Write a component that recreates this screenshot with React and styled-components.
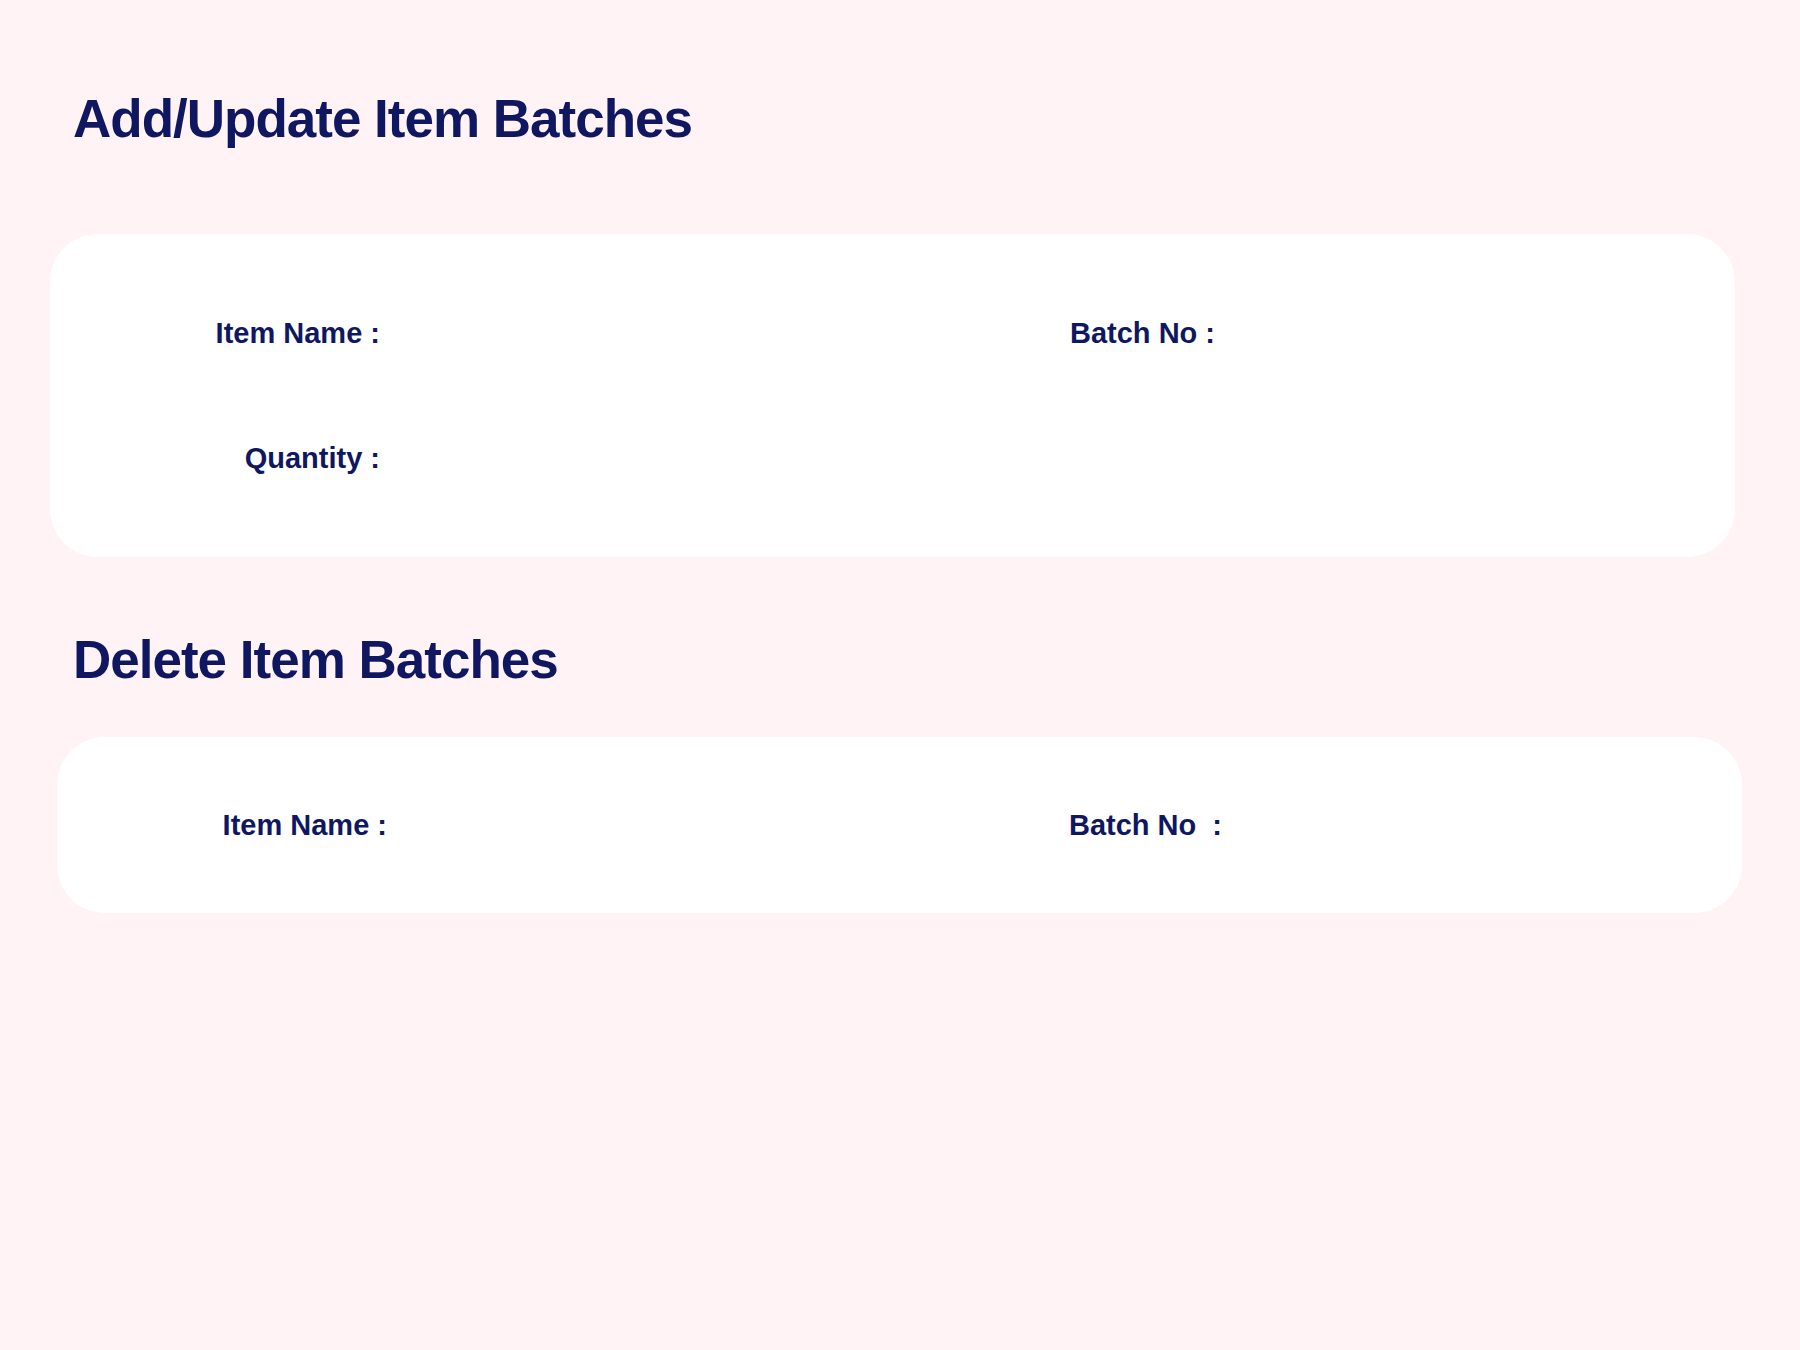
import React, { useState } from 'react';
import styled, { createGlobalStyle } from 'styled-components';

const GlobalStyle = createGlobalStyle`
  html, body {
    margin: 0;
    padding: 0;
    background: #fff3f6;
  }
  * {
    box-sizing: border-box;
  }
`;

const Page = styled.div`
  min-height: 100vh;
  background: #fff3f6;
  padding: 92px 65px 80px 50px;
  display: flex;
  flex-direction: column;
`;

const Title = styled.h1`
  margin: ${p => p.$top || 0}px 0 0 23px;
  font-family: 'Liberation Sans', Arial, sans-serif;
  font-weight: 700;
  font-size: 53px;
  line-height: 54px;
  letter-spacing: -1px;
  color: #0f1761;
`;

const Card = styled.div`
  margin: ${p => p.$top}px 0 0 ${p => p.$shift || 0}px;
  margin-right: ${p => -(p.$shift || 0)}px;
  background: #ffffff;
  border-radius: 48px;
  padding: ${p => p.$pad}px 130px;
  display: grid;
  grid-template-columns: 835px 1fr;
  row-gap: 75px;
`;

const Field = styled.div`
  display: flex;
  align-items: center;
  height: 50px;
`;

const Label = styled.label`
  width: 200px;
  flex-shrink: 0;
  text-align: right;
  font-family: 'Liberation Sans', Arial, sans-serif;
  font-weight: 700;
  font-size: 29px;
  line-height: 50px;
  color: #0f1761;
  white-space: pre;
`;

const Input = styled.input`
  flex: 1;
  height: 50px;
  margin-left: 20px;
  border: none;
  outline: none;
  background: transparent;
  font-family: 'Liberation Sans', Arial, sans-serif;
  font-size: 22px;
  color: #0f1761;
`;

function App() {
  const [form, setForm] = useState({ item: '', batch: '', qty: '' });
  const [del, setDel] = useState({ item: '', batch: '' });

  const handle = (setter) => (e) => {
    const { name, value } = e.target;
    setter(prev => ({ ...prev, [name]: value }));
  };

  return (
    <Page>
      <GlobalStyle />
      <Title>Add/Update Item Batches</Title>

      <Card $top={88} $pad={74}>
        <Field>
          <Label>Item Name :</Label>
          <Input name="item" value={form.item} onChange={handle(setForm)} />
        </Field>
        <Field>
          <Label>Batch No :</Label>
          <Input name="batch" value={form.batch} onChange={handle(setForm)} />
        </Field>
        <Field>
          <Label>Quantity :</Label>
          <Input name="qty" value={form.qty} onChange={handle(setForm)} />
        </Field>
      </Card>

      <Title $top={76}>Delete Item Batches</Title>

      <Card $top={50} $pad={63} $shift={7}>
        <Field>
          <Label>Item Name :</Label>
          <Input name="item" value={del.item} onChange={handle(setDel)} />
        </Field>
        <Field>
          <Label>{'Batch No\u00a0 :'}</Label>
          <Input name="batch" value={del.batch} onChange={handle(setDel)} />
        </Field>
      </Card>
    </Page>
  );
}

export default App;
